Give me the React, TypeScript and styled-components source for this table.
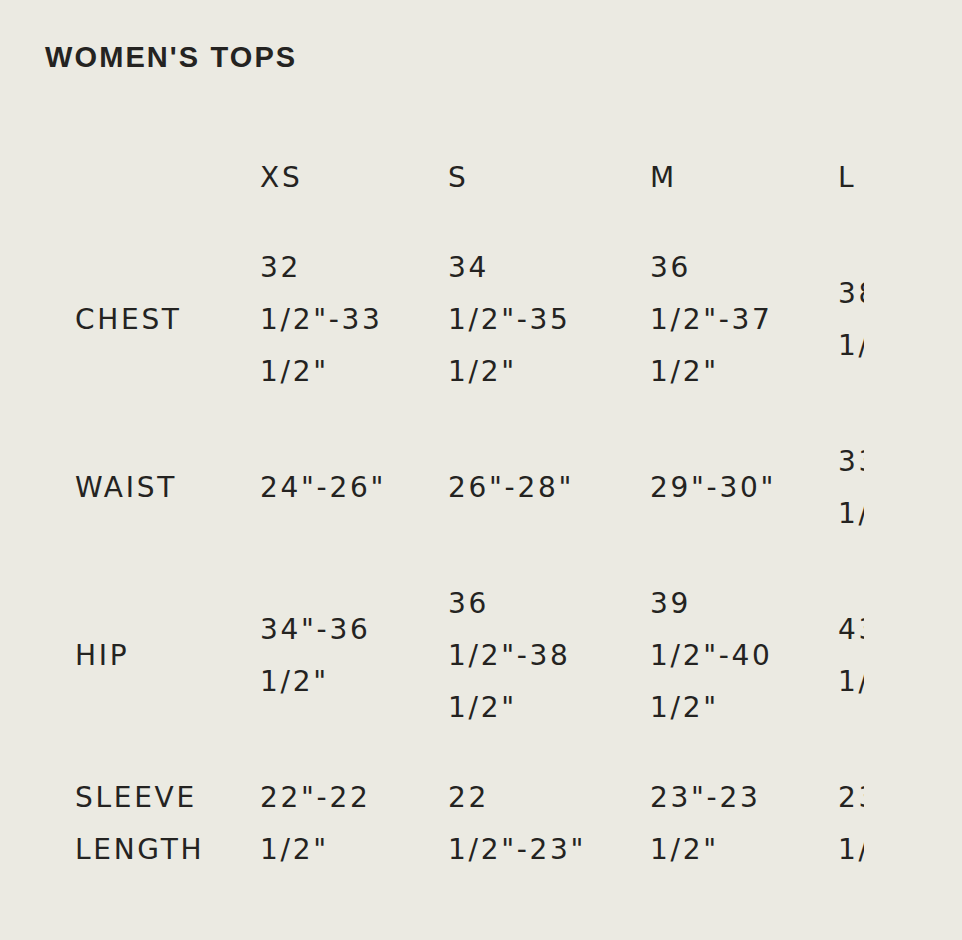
import React from 'react';
import styled, { createGlobalStyle } from 'styled-components';

const GlobalStyle = createGlobalStyle`
  html, body {
    margin: 0;
    padding: 0;
    background: #ebeae2;
  }
`;

let Page = styled.div`
  min-height: 940px;
  padding: 40px 0 0 45px;
  box-sizing: border-box;
  background: #ebeae2;
  color: #242321;
`;

let Title = styled.h2`
  margin: 0;
  font-family: 'Liberation Sans', Arial, sans-serif;
  font-weight: bold;
  font-size: 29px;
  line-height: 34px;
  letter-spacing: 2.1px;
`;

let TableWrap = styled.div`
  width: 819px;
  overflow: hidden;
  margin-top: 59px;
`;

let Table = styled.table`
  border-collapse: collapse;
  table-layout: fixed;
  width: 979px;
  font-family: 'DejaVu Sans', Verdana, sans-serif;
  font-size: 28px;
  letter-spacing: 2.7px;
  line-height: 52px;
`;

let Cell = styled.td`
  padding: 19px 0 19px 30px;
  vertical-align: middle;
  text-align: left;
  font-weight: normal;
`;

const widths = [185, 188, 202, 188, 216];
const sizes = ['XS', 'S', 'M', 'L'];

const rows: { label: string; values: string[] }[] = [
  { label: 'CHEST', values: ['32 1/2"-33 1/2"', '34 1/2"-35 1/2"', '36 1/2"-37 1/2"', '38 1/2"-40 1/2"'] },
  { label: 'WAIST', values: ['24"-26"', '26"-28"', '29"-30"', '33"-35 1/2"'] },
  { label: 'HIP', values: ['34"-36 1/2"', '36 1/2"-38 1/2"', '39 1/2"-40 1/2"', '43"-45 1/2"'] },
  { label: 'SLEEVE LENGTH', values: ['22"-22 1/2"', '22 1/2"-23"', '23"-23 1/2"', '23 1/2"-24"'] },
];

const App: React.FC = () => {
  return (
    <>
      <GlobalStyle />
      <Page>
        <Title>WOMEN'S TOPS</Title>
        <TableWrap>
          <Table>
            <colgroup>
              {widths.map((w, i) => (
                <col key={i} style={{ width: w }} />
              ))}
            </colgroup>
            <thead>
              <tr>
                <Cell as="th" />
                {sizes.map((s) => (
                  <Cell as="th" key={s}>
                    {s}
                  </Cell>
                ))}
              </tr>
            </thead>
            <tbody>
              {rows.map((row) => (
                <tr key={row.label}>
                  <Cell>{row.label}</Cell>
                  {row.values.map((v, i) => (
                    <Cell key={i}>{v}</Cell>
                  ))}
                </tr>
              ))}
            </tbody>
          </Table>
        </TableWrap>
      </Page>
    </>
  );
};

export default App;
